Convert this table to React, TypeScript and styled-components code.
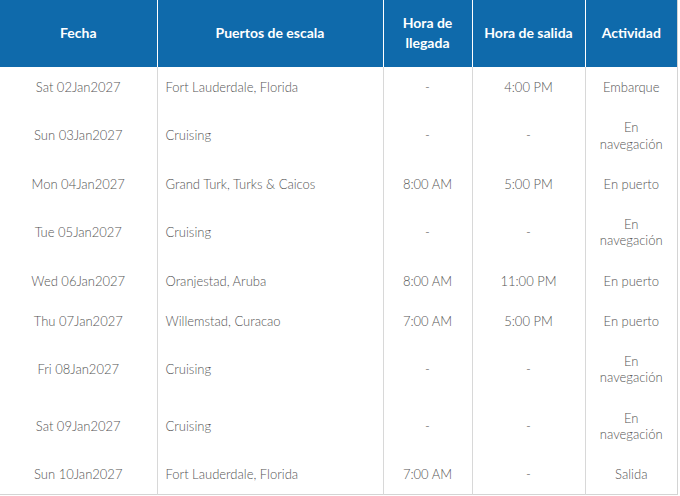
import React from 'react';
import styled, { createGlobalStyle } from 'styled-components';

const GlobalStyle = createGlobalStyle`
  html, body {
    margin: 0;
    padding: 0;
    background: #ffffff;
    font-family: Lato, "Open Sans", Arial, sans-serif;
  }
`;

const Table = styled.table`
  width: 678px;
  table-layout: fixed;
  border-collapse: collapse;
  border-right: 1px solid #d4d4d4;
  border-bottom: 1px solid #d4d4d4;
`;

const HeadCell = styled.th`
  background: #0f6aab;
  color: #ffffff;
  font-size: 14px;
  font-weight: 700;
  line-height: 20px;
  padding: 13px 8px 14px;
  text-align: center;
  border-left: 1px solid #ffffff;

  &:first-child {
    border-left: none;
  }
`;

const Cell = styled.td<{ $left?: boolean }>`
  color: #555555;
  font-size: 13px;
  font-weight: 300;
  line-height: 16.25px;
  padding: 12px 8px;
  text-align: ${(p) => (p.$left ? 'left' : 'center')};
  vertical-align: middle;
  border-left: 1px solid #d8d8d8;

  &:first-child {
    border-left: none;
  }
`;

type Stop = {
  date: string;
  port: string;
  arrive: string;
  depart: string;
  activity: string;
};

const stops: Stop[] = [
  { date: 'Sat 02Jan2027', port: 'Fort Lauderdale, Florida', arrive: '-', depart: '4:00 PM', activity: 'Embarque' },
  { date: 'Sun 03Jan2027', port: 'Cruising', arrive: '-', depart: '-', activity: 'En navegación' },
  { date: 'Mon 04Jan2027', port: 'Grand Turk, Turks & Caicos', arrive: '8:00 AM', depart: '5:00 PM', activity: 'En puerto' },
  { date: 'Tue 05Jan2027', port: 'Cruising', arrive: '-', depart: '-', activity: 'En navegación' },
  { date: 'Wed 06Jan2027', port: 'Oranjestad, Aruba', arrive: '8:00 AM', depart: '11:00 PM', activity: 'En puerto' },
  { date: 'Thu 07Jan2027', port: 'Willemstad, Curacao', arrive: '7:00 AM', depart: '5:00 PM', activity: 'En puerto' },
  { date: 'Fri 08Jan2027', port: 'Cruising', arrive: '-', depart: '-', activity: 'En navegación' },
  { date: 'Sat 09Jan2027', port: 'Cruising', arrive: '-', depart: '-', activity: 'En navegación' },
  { date: 'Sun 10Jan2027', port: 'Fort Lauderdale, Florida', arrive: '7:00 AM', depart: '-', activity: 'Salida' },
];

const App: React.FC = () => {
  return (
    <>
      <GlobalStyle />
      <Table>
        <colgroup>
          <col style={{ width: 157 }} />
          <col style={{ width: 226 }} />
          <col style={{ width: 89 }} />
          <col style={{ width: 113 }} />
          <col />
        </colgroup>
        <thead>
          <tr>
            <HeadCell>Fecha</HeadCell>
            <HeadCell>Puertos de escala</HeadCell>
            <HeadCell>Hora de llegada</HeadCell>
            <HeadCell>Hora de salida</HeadCell>
            <HeadCell>Actividad</HeadCell>
          </tr>
        </thead>
        <tbody>
          {stops.map((s) => (
            <tr key={s.date}>
              <Cell>{s.date}</Cell>
              <Cell $left>{s.port}</Cell>
              <Cell>{s.arrive}</Cell>
              <Cell>{s.depart}</Cell>
              <Cell>{s.activity}</Cell>
            </tr>
          ))}
        </tbody>
      </Table>
    </>
  );
};

export default App;
